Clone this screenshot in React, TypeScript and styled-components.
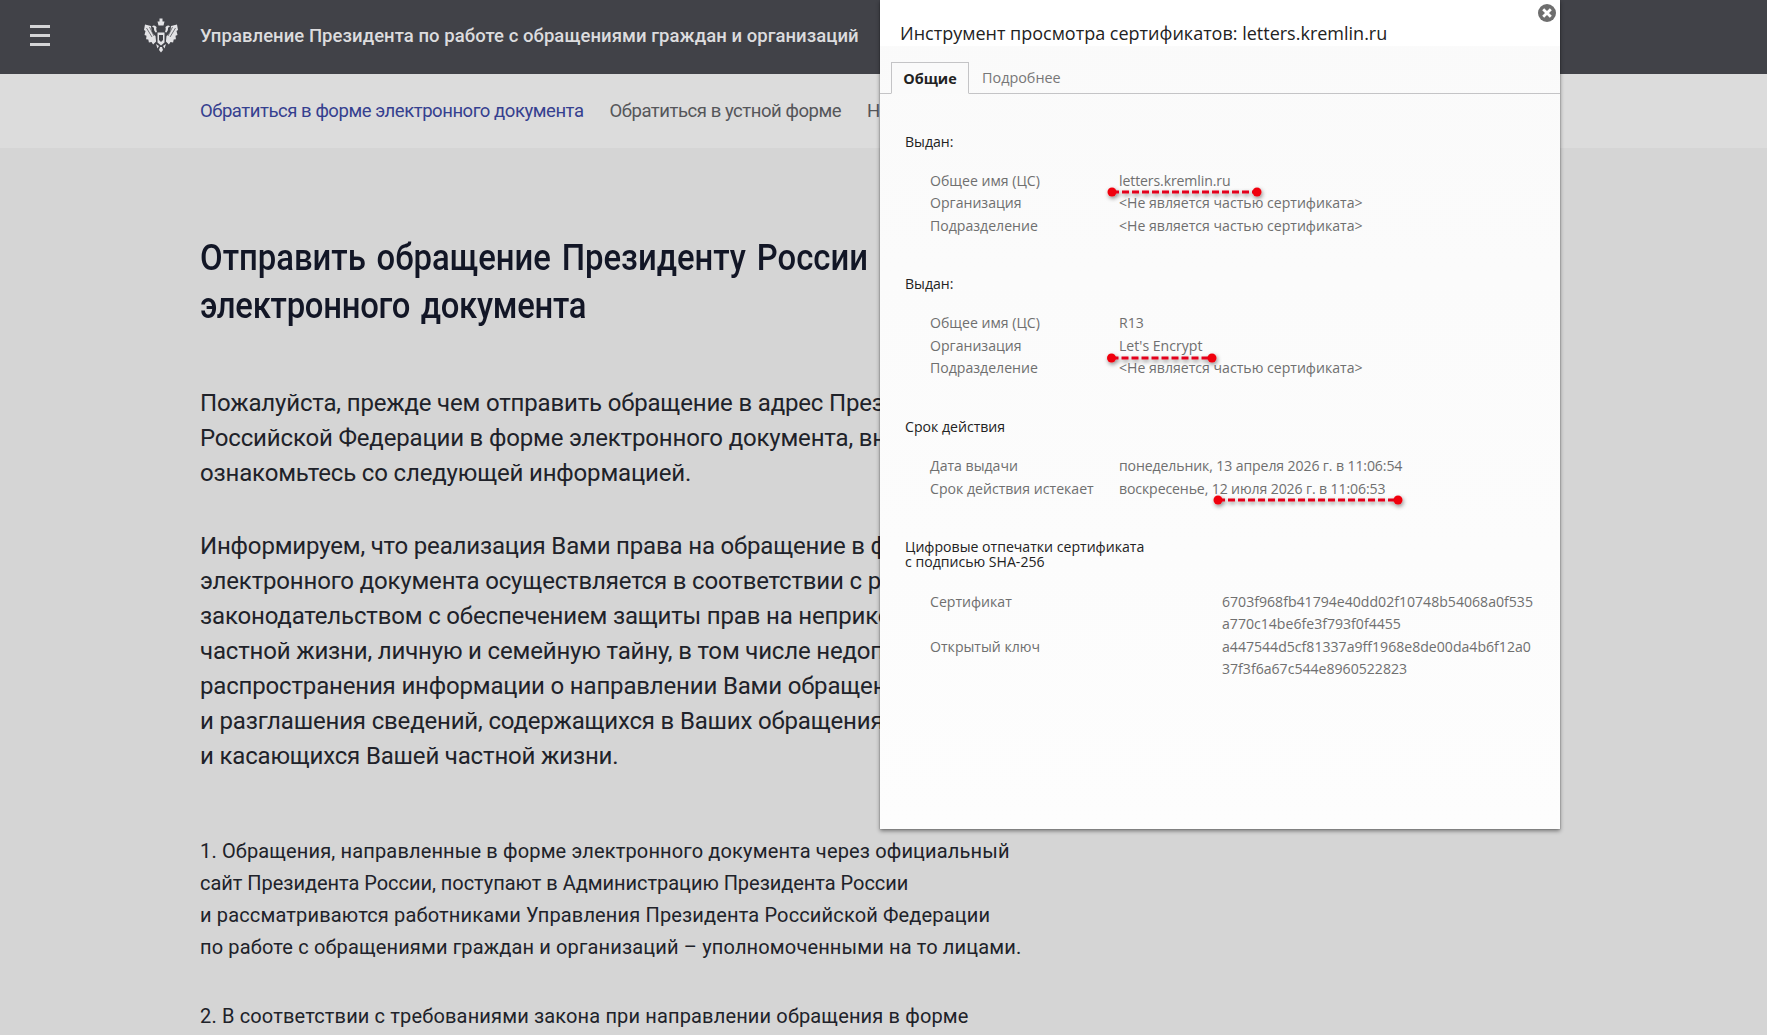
import React from "react";
import styled, { createGlobalStyle } from "styled-components";

const Global = createGlobalStyle`
  html, body { margin: 0; padding: 0; background: #d5d5d5; overflow: hidden; }
  #root { width: 1767px; height: 1035px; overflow: hidden; position: relative; }
`;

const Page = styled.div`
  display: flex;
  flex-direction: column;
  height: 1035px;
  overflow: hidden;
  font-family: Roboto, "Liberation Sans", sans-serif;
  color: #1c1f2a;
`;
const Header = styled.header`
  flex: none;
  height: 74px;
  box-sizing: border-box;
  padding: 0 0 2px 30px;
  background: #414248;
  display: flex;
  align-items: center;
`;
const Burger = styled.div`
  width: 20px;
  height: 21px;
  margin-bottom: 1px;
  display: flex;
  flex-direction: column;
  justify-content: space-between;
  & > i { display: block; height: 3px; background: #d5d5d7; }
`;
const LogoWrap = styled.div`
  margin-left: 92px;
  width: 38px;
  height: 38px;
  flex: none;
`;
const HeaderTitle = styled.div`
  margin-left: 20px;
  font-size: 18.5px;
  letter-spacing: 0.05px;
  font-weight: 500;
  color: #dcdcde;
  white-space: nowrap;
`;
const SubNav = styled.nav`
  flex: none;
  height: 74px;
  background: #dcdcdc;
  display: flex;
  align-items: center;
  gap: 26px;
  padding-left: 200px;
  box-sizing: border-box;
  white-space: nowrap;
`;
const NavItem = styled.span<{ $active?: boolean }>`
  font-size: 18.5px;
  letter-spacing: -0.45px;
  color: ${(p) => (p.$active ? "#35408f" : "#55565a")};
`;
const Content = styled.main`
  padding: 86px 0 0 200px;
  white-space: nowrap;
`;
const Heading = styled.h1`
  margin: 0 0 56px;
  font-size: 36.5px;
  line-height: 48px;
  font-weight: 500;
  color: #121626;
  word-spacing: 3px;
  transform: scaleX(0.9);
  transform-origin: left center;
`;
const HeadingTail = styled.span`
  letter-spacing: -0.3px;
`;
const Lead = styled.p`
  margin: 0 0 38px;
  font-size: 24px;
  line-height: 35px;
  letter-spacing: -0.17px;
  color: #202229;
`;
const Item = styled.p`
  margin: 0 0 37px;
  font-size: 20px;
  line-height: 32px;
  letter-spacing: 0.15px;
  color: #202229;
  ${Lead} + & { margin-top: 61px; }
`;
const TightLine = styled.span`
  letter-spacing: -0.035px;
`;

const Modal = styled.section`
  position: absolute;
  left: 880px;
  top: 0;
  width: 680px;
  height: 829px;
  background: linear-gradient(#fafafa, #fdfdfd);
  box-shadow: 0 2px 4px rgba(0, 0, 0, 0.45), 0 0 1px rgba(0, 0, 0, 0.4);
  font-family: "Open Sans", "Liberation Sans", sans-serif;
`;
const ModalTitle = styled.div`
  height: 46px;
  background: #fff;
  box-sizing: border-box;
  padding: 20px 0 0 20px;
  font-size: 18px;
  line-height: 26px;
  color: #222;
  white-space: nowrap;
`;
const Close = styled.div`
  position: absolute;
  right: 4px;
  top: 4px;
  width: 18px;
  height: 18px;
`;
const Tabs = styled.div`
  margin-top: 16px;
  height: 31px;
  border-bottom: 1px solid #c4c4c6;
  display: flex;
  padding-left: 11px;
`;
const Tab = styled.div<{ $active?: boolean }>`
  box-sizing: border-box;
  height: 32px;
  line-height: 32px;
  font-size: 14.4px;
  ${(p) =>
    p.$active
      ? `width: 78px; text-align: center; font-weight: 700; color: #222; background: #fafafa;
         border: 1px solid #c4c4c6; border-bottom: 1px solid #fafafa;`
      : `margin-left: 13px; color: #777;`}
`;
const Body = styled.div`
  padding: 40px 0 0 25px;
`;
const SectionTitle = styled.div<{ $top?: number }>`
  font-size: 14.1px;
  line-height: 15px;
  color: #222;
  margin-top: ${(p) => p.$top ?? 0}px;
`;
const Rows = styled.div<{ $col: number; $gap?: number }>`
  margin: ${(p) => p.$gap ?? 21}px 0 0 25px;
  display: grid;
  grid-template-columns: ${(p) => p.$col}px 1fr;
  grid-auto-rows: 22.5px;
  align-items: center;
  font-size: 14.1px;
  color: #6f6f6f;
  white-space: nowrap;
`;
const TightValue = styled.span`
  letter-spacing: -0.12px;
`;
const Marks = styled.svg`
  position: absolute;
  left: 0;
  top: 0;
  pointer-events: none;
  overflow: visible;
`;

const Eagle = () => (
  <svg viewBox="0 0 38 38" width="38" height="38">
    <g fill="#e2e2e5">
      <path d="M17.500 1.500h3v3h-3zM15.500 4.500h7l-1 4h-5z" />
      <path d="M14 9.500c-1.500-1.500-3-1.500-4 0l2 1.200c-.3 1.800.4 3.800 2 5l1-1.200c-.8-1.200-1-3-.4-4.200zM24 9.500c1.500-1.500 3-1.500 4 0l-2 1.200c.3 1.800-.4 3.800-2 5l-1-1.200c.8-1.200 1-3 .4-4.200z" />
      <path d="M9 9L3 7.500 2 13l1.500 1L2.500 18l2 .8-.4 3.500 2.200.3.6 3 2.600-.6 1.600 2.400 3-3-.6-5.500c-3-2-4.500-5.200-4.500-10.400zM29 9l6-1.500L36 13l-1.500 1 1 4-2 .8.4 3.500-2.200.3-.6 3-2.600-.6-1.600 2.400-3-3 .6-5.500c3-2 4.500-5.200 4.500-10.400z" />
      <path d="M15.500 15.500h7v10l-3.500 3-3.500-3z" />
      <path d="M14 27l3 2-1.500 2.500zM24 27l-3 2 1.500 2.500zM18 30h2l1 3-2 2.500-2-2.500z" />
    </g>
    <path d="M17 18h4v5l-2 2-2-2z" fill="#414248" />
    <path d="M4.500 11l5.500 9M7.500 10l4.500 9M10 10l3 7M33.500 11l-5.500 9M30.500 10l-4.500 9M28 10l-3 7" stroke="#414248" strokeWidth=".7" fill="none" />
  </svg>
);

const marks = [
  { x1: 232, x2: 377, y: 192 },
  { x1: 231.5, x2: 332, y: 358 },
  { x1: 338, x2: 518, y: 500 },
];

export default function App() {
  return (
    <>
      <Global />
      <Page>
        <Header>
          <Burger>
            <i />
            <i />
            <i />
          </Burger>
          <LogoWrap>
            <Eagle />
          </LogoWrap>
          <HeaderTitle>Управление Президента по работе с обращениями граждан и организаций</HeaderTitle>
        </Header>
        <SubNav>
          <NavItem $active>Обратиться в форме электронного документа</NavItem>
          <NavItem>Обратиться в устной форме</NavItem>
          <NavItem>Написать</NavItem>
        </SubNav>
        <Content>
          <Heading>
            Отправить обращение Президенту России в форме
            <br />
            <HeadingTail>электронного документа</HeadingTail>
          </Heading>
          <Lead>
            Пожалуйста, прежде чем отправить обращение в адрес Президента
            <br />
            Российской Федерации в форме электронного документа, внимательно
            <br />
            ознакомьтесь со следующей информацией.
          </Lead>
          <Lead>
            Информируем, что реализация Вами права на обращение в форме
            <br />
            электронного документа осуществляется в соответствии с российским
            <br />
            законодательством с обеспечением защиты прав на неприкосновенность
            <br />
            частной жизни, личную и семейную тайну, в том числе недопущения
            <br />
            распространения информации о направлении Вами обращения
            <br />
            и разглашения сведений, содержащихся в Ваших обращениях
            <br />и касающихся Вашей частной жизни.
          </Lead>
          <Item>
            1. Обращения, направленные в форме электронного документа через официальный
            <br />
            <TightLine>сайт Президента России, поступают в Администрацию Президента России</TightLine>
            <br />
            и рассматриваются работниками Управления Президента Российской Федерации
            <br />
            по работе с обращениями граждан и организаций – уполномоченными на то лицами.
          </Item>
          <Item>2. В соответствии с требованиями закона при направлении обращения в форме</Item>
        </Content>
      </Page>
      <Modal>
        <ModalTitle>Инструмент просмотра сертификатов: letters.kremlin.ru</ModalTitle>
        <Close>
          <svg viewBox="0 0 18 18" width="18" height="18">
            <circle cx="9" cy="9" r="9" fill="#6e6e6e" />
            <path d="M5.200 5.200l7.600 7.600M12.800 5.200l-7.600 7.600" stroke="#fff" strokeWidth="2.800" />
          </svg>
        </Close>
        <Tabs>
          <Tab $active>Общие</Tab>
          <Tab>Подробнее</Tab>
        </Tabs>
        <Body>
          <SectionTitle>Выдан:</SectionTitle>
          <Rows $col={189} $gap={20}>
            <span>Общее имя (ЦС)</span>
            <TightValue>letters.kremlin.ru</TightValue>
            <span>Организация</span>
            <span>&lt;Не является частью сертификата&gt;</span>
            <span>Подразделение</span>
            <span>&lt;Не является частью сертификата&gt;</span>
          </Rows>
          <SectionTitle $top={39}>Выдан:</SectionTitle>
          <Rows $col={189}>
            <span>Общее имя (ЦС)</span>
            <span>R13</span>
            <span>Организация</span>
            <span>Let's Encrypt</span>
            <span>Подразделение</span>
            <span>&lt;Не является частью сертификата&gt;</span>
          </Rows>
          <SectionTitle $top={39.5}>Срок действия</SectionTitle>
          <Rows $col={189}>
            <span>Дата выдачи</span>
            <TightValue>понедельник, 13 апреля 2026 г. в 11:06:54</TightValue>
            <span>Срок действия истекает</span>
            <TightValue>воскресенье, 12 июля 2026 г. в 11:06:53</TightValue>
          </Rows>
          <SectionTitle $top={39.5}>
            Цифровые отпечатки сертификата
            <br />с подписью SHA-256
          </SectionTitle>
          <Rows $col={292}>
            <span>Сертификат</span>
            <span>6703f968fb41794e40dd02f10748b54068a0f535</span>
            <span />
            <span>a770c14be6fe3f793f0f4455</span>
            <span>Открытый ключ</span>
            <span>a447544d5cf81337a9ff1968e8de00da4b6f12a0</span>
            <span />
            <span>37f3f6a67c544e8960522823</span>
          </Rows>
        </Body>
        <Marks width="680" height="829">
          <defs>
            <filter id="ms" x="-10%" y="-300%" width="120%" height="700%">
              <feDropShadow dx="1" dy="2" stdDeviation="2" floodColor="#000" floodOpacity="0.45" />
            </filter>
          </defs>
          {marks.map((m) => (
            <g key={m.y} filter="url(#ms)">
              <line x1={m.x1} x2={m.x2} y1={m.y} y2={m.y} stroke="#e3001b" strokeWidth="3" strokeDasharray="7 3" />
              <circle cx={m.x1} cy={m.y} r="4.500" fill="#f00010" />
              <circle cx={m.x2} cy={m.y} r="4.500" fill="#f00010" />
            </g>
          ))}
        </Marks>
      </Modal>
    </>
  );
}
